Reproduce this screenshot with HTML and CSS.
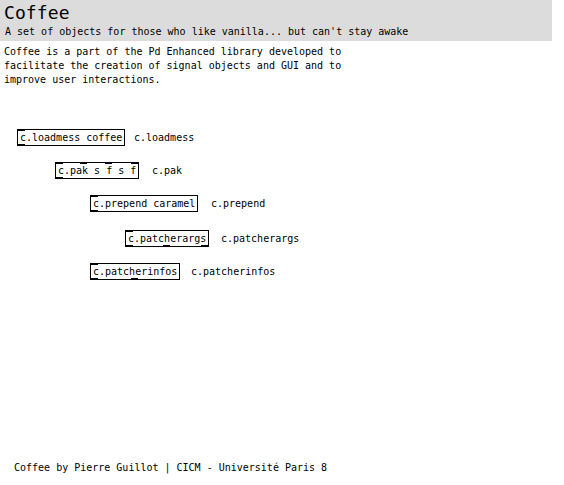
FILE: index.html
```html
<!DOCTYPE html>
<html>
<head>
<meta charset="utf-8">
<link rel="stylesheet" href="styles.css">
</head>
<body>
<div class="page">
  <header class="head">
    <div class="title">Coffee</div>
    <div class="subtitle">A set of objects for those who like vanilla... but can't stay awake</div>
  </header>
  <p class="desc">Coffee is a part of the Pd Enhanced library developed to<br>facilitate the creation of signal objects and GUI and to<br>improve user interactions.</p>
  <div class="canvas">
    <div class="obj" style="left:17px;top:129px">c.loadmess coffee<i class="inl l"></i><i class="out l"></i></div>
    <div class="cmt" style="left:134px;top:129px">c.loadmess</div>

    <div class="obj" style="left:55px;top:162px">c.pak s f s f<i class="inl l"></i><i class="inl" style="left:24px"></i><i class="inl" style="left:49px"></i><i class="inl r"></i><i class="out l"></i></div>
    <div class="cmt" style="left:152px;top:162px">c.pak</div>

    <div class="obj" style="left:90px;top:195px">c.prepend caramel<i class="inl l"></i><i class="out l"></i></div>
    <div class="cmt" style="left:211px;top:195px">c.prepend</div>

    <div class="obj" style="left:125px;top:230px">c.patcherargs<i class="inl l"></i><i class="out l"></i><i class="out" style="left:37px"></i><i class="out r"></i></div>
    <div class="cmt" style="left:221px;top:230px">c.patcherargs</div>

    <div class="obj" style="left:90px;top:263px">c.patcherinfos<i class="inl l"></i><i class="out l"></i><i class="out" style="left:40px"></i></div>
    <div class="cmt" style="left:191px;top:263px">c.patcherinfos</div>
  </div>
  <footer class="foot">Coffee by Pierre Guillot | CICM - Université Paris 8</footer>
</div>
</body>
</html>
```
FILE: styles.css
```css
html, body {
  margin: 0;
  padding: 0;
  background: #fff;
}
body {
  font-family: "DejaVu Sans Mono", "Liberation Mono", monospace;
  font-size: 10px;
  color: #000;
}
.page {
  position: relative;
  width: 564px;
  height: 485px;
  overflow: hidden;
}
.head {
  width: 552px;
  height: 41px;
  background: #dcdcdc;
  box-sizing: border-box;
  padding: 2px 0 0 4px;
}
.title {
  font-size: 18px;
  line-height: 22px;
  letter-spacing: 0.1px;
}
.subtitle {
  font-size: 10px;
  line-height: 14px;
  padding-left: 1px;
  margin-top: 1px;
}
.desc {
  margin: 4px 0 0 4px;
  line-height: 14px;
}
.canvas {
  position: absolute;
  left: 0;
  top: 0;
  width: 564px;
  height: 300px;
}
.obj {
  position: absolute;
  border: 1px solid #000;
  height: 15px;
  line-height: 15px;
  padding: 0 2px;
  white-space: pre;
  background: #fff;
}
.obj i {
  position: absolute;
  width: 7px;
  height: 1px;
  background: #000;
}
.obj .inl { top: 0; }
.obj .out { bottom: 0; }
.obj .l { left: 0; }
.obj .r { right: 0; }
.cmt {
  position: absolute;
  line-height: 17px;
  white-space: pre;
}
.foot {
  position: absolute;
  left: 14px;
  top: 460px;
  line-height: 16px;
}
```
